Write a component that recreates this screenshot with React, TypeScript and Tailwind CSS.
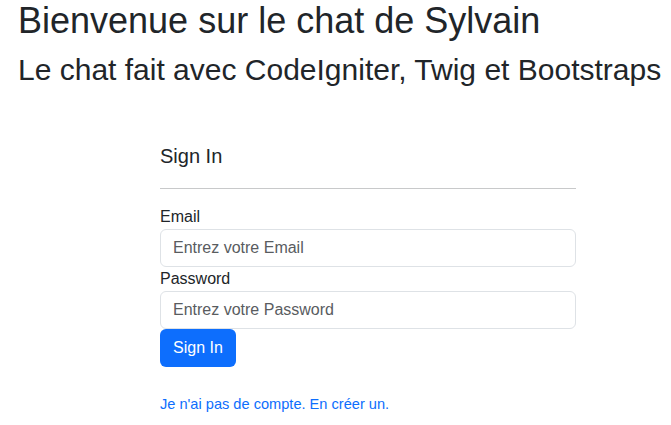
export default function App() {
  return (
    <div className="min-h-screen bg-white text-[#212529] font-['Liberation_Sans',Arial,sans-serif]">
      {/* Header */}
      <div className="pl-[18px] pt-[2px] whitespace-nowrap">
        <h1 className="text-[36px] leading-[38px] mb-[12px]">Bienvenue sur le chat de Sylvain</h1>
        <h2 className="text-[30px] leading-[36px]">Le chat fait avec CodeIgniter, Twig et Bootstraps</h2>
      </div>

      {/* Sign in form */}
      <div className="w-[416px] ml-[160px] mt-[56px]">
        <h5 className="text-[20px] leading-[1.2]">Sign In</h5>
        <hr className="mt-[20px] mb-4 border-0 border-t border-[#c8c9ca]" />
        <form onSubmit={(e) => e.preventDefault()}>
          <label className="block text-base leading-6">Email</label>
          <input
            type="email"
            placeholder="Entrez votre Email"
            className="block w-full h-[38px] px-3 text-base rounded-md border border-[#dee2e6] outline-none placeholder:text-[#595c5f]"
          />
          <label className="block text-base leading-6">Password</label>
          <input
            type="password"
            placeholder="Entrez votre Password"
            className="block w-full h-[38px] px-3 text-base rounded-md border border-[#dee2e6] outline-none placeholder:text-[#595c5f]"
          />
          <button
            type="submit"
            className="h-[38px] px-[13px] text-base text-white bg-[#0d6efd] rounded-md"
          >
            Sign In
          </button>
        </form>
        <p className="mt-[27px] text-[14.6px] leading-[21px]">
          <a href="#" className="text-[#0d6efd]">Je n'ai pas de compte. En créer un.</a>
        </p>
      </div>
    </div>
  );
}
